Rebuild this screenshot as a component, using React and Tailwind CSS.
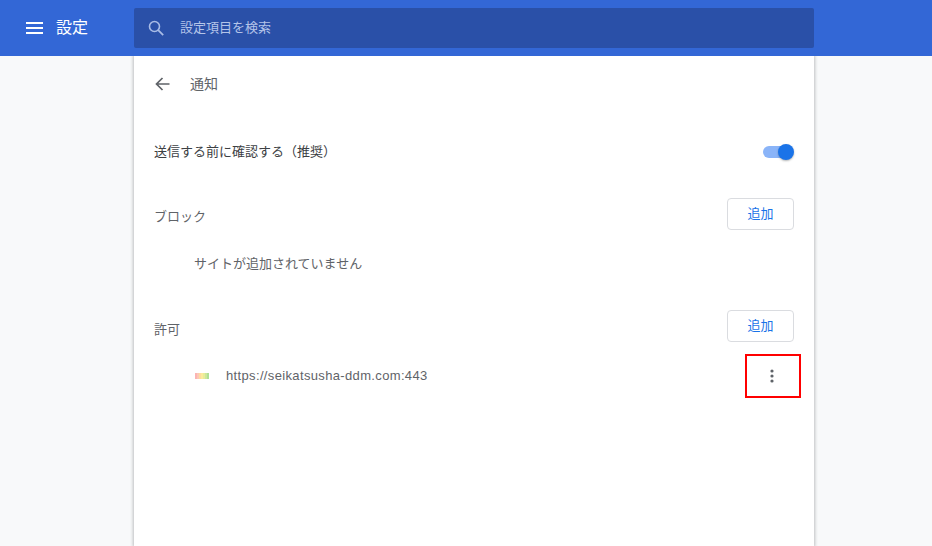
import React from "react";

function AddButton() {
  return (
    <button className="w-[67px] h-8 rounded border border-[#dadce0] bg-white text-[13px] text-[#1a73e8] flex items-center justify-center">
      追加
    </button>
  );
}

export default function App() {
  return (
    <div className="w-[932px] h-[546px] overflow-hidden bg-[#f8f9fa] flex flex-col text-[13px] text-[#5f6368] font-['Liberation_Sans','Noto_Sans_CJK_JP',sans-serif]">
      <header className="h-14 shrink-0 bg-[#3367d6] flex items-center relative z-10">
        <div className="w-[134px] shrink-0 flex items-center pl-[26px]">
          <svg width="17" height="12" viewBox="0 0 17 12" className="block">
            <path d="M0 1h17M0 6h17M0 11h17" stroke="#fff" strokeWidth="2" fill="none" />
          </svg>
          <span className="ml-[13px] text-base text-white">設定</span>
        </div>
        <div className="w-[680px] h-10 rounded-[2px] bg-[#2a50a8] flex items-center pl-[14px]">
          <svg width="16" height="16" viewBox="0 0 16 16" className="block">
            <circle cx="6.5" cy="6.5" r="5" stroke="#a9bce6" strokeWidth="1.6" fill="none" />
            <path d="M10.2 10.2L15.2 15.2" stroke="#a9bce6" strokeWidth="1.8" fill="none" />
          </svg>
          <span className="ml-[16px] text-[13px] text-[#b4c4e8]">設定項目を検索</span>
        </div>
      </header>

      <main className="w-[680px] ml-[134px] flex-1 bg-white shadow-[0_0_3px_1px_rgba(60,64,67,0.3)] relative">
        <div className="h-14 flex items-center pl-[21px]">
          <svg width="15" height="14" viewBox="0 0 15 14" className="block">
            <path d="M14.5 7H1.5M7.5 1L1.5 7L7.5 13" stroke="#5f6368" strokeWidth="1.7" fill="none" />
          </svg>
          <span className="ml-[20px] text-sm">通知</span>
        </div>

        <div className="h-[48px] mt-[16px] flex items-center justify-between pl-5 pr-5">
          <span className="text-[#3c4043]">送信する前に確認する（推奨）</span>
          <div className="relative w-[31px] h-4 flex items-center">
            <div className="w-[30px] h-3 rounded-full bg-[#8ab4f8]" />
            <div className="absolute right-0 top-0 w-4 h-4 rounded-full bg-[#1a73e8] shadow-[0_1px_2px_rgba(60,64,67,0.4)]" />
          </div>
        </div>

        <div className="mt-[22px] h-8 flex items-center justify-between pl-5 pr-5">
          <span className="pt-[6px]">ブロック</span>
          <AddButton />
        </div>

        <div className="mt-[17px] h-8 flex items-center pl-[60px] pt-[2px]">サイトが追加されていません</div>

        <div className="mt-[31px] h-8 flex items-center justify-between pl-5 pr-5">
          <span className="pt-[7px]">許可</span>
          <AddButton />
        </div>

        <div className="mt-[12px] h-[44px] flex items-center pl-[61px] pr-5 justify-between">
          <div className="flex items-center">
            <div className="flex h-[6px] w-[14px]">
              <div className="flex-1 bg-[#fbb4b4]" />
              <div className="flex-1 bg-[#fcc8b4]" />
              <div className="flex-1 bg-[#fddca0]" />
              <div className="flex-1 bg-[#fbeb9c]" />
              <div className="flex-1 bg-[#e8ec9a]" />
              <div className="flex-1 bg-[#cde79a]" />
              <div className="flex-1 bg-[#b0df96]" />
            </div>
            <span className="ml-[17px] text-[13px] tracking-[0.35px]">https://seikatsusha-ddm.com:443</span>
          </div>
          <svg width="4" height="14" viewBox="0 0 4 14" className="block mr-[20px]">
            <circle cx="2" cy="2" r="1.6" fill="#5f6368" />
            <circle cx="2" cy="7" r="1.6" fill="#5f6368" />
            <circle cx="2" cy="12" r="1.6" fill="#5f6368" />
          </svg>
        </div>

        <div className="absolute left-[611px] top-[298px] w-[56px] h-[44px] border-2 border-[#ff0000]" />
      </main>
    </div>
  );
}
